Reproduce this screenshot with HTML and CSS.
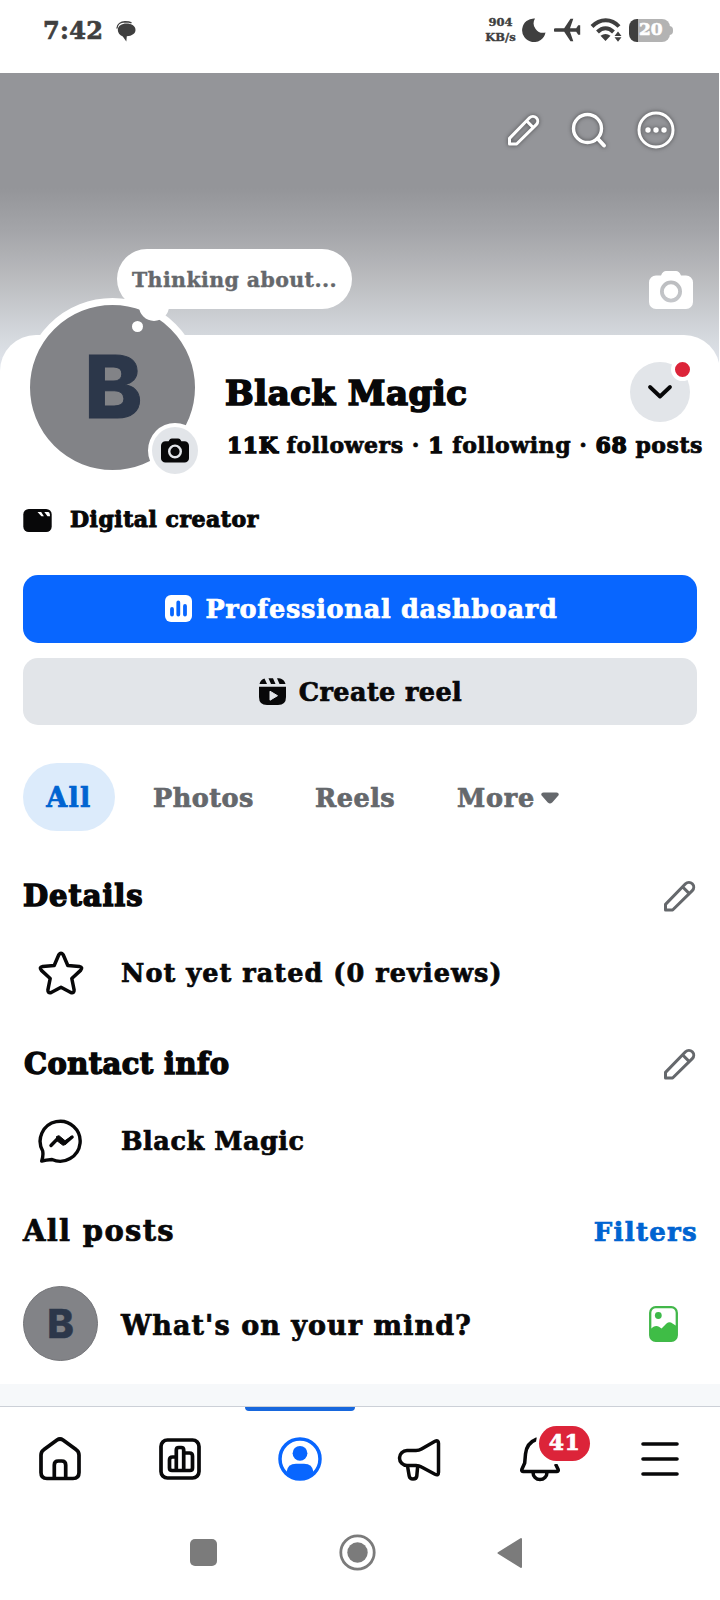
FILE: index.html
```html
<!DOCTYPE html>
<html lang="en">
<head>
<meta charset="utf-8">
<title>Black Magic</title>
<link rel="stylesheet" href="styles.css">
</head>
<body>
<svg class="defs" width="0" height="0">
  <symbol id="pencil" viewBox="0 0 34 34">
    <path d="M2.500 31v-5.600L22.500 4.800a4.800 4.800 0 0 1 6.800 6.800L9.600 31zM19.500 7.800l6.800 6.800" fill="none" stroke="currentColor" stroke-width="3" stroke-linejoin="round"/>
  </symbol>
  <symbol id="camera" viewBox="0 0 44 38">
    <path fill="currentColor" fill-rule="evenodd" d="M12 4.500C13.500 1 15 0 17 0h10c2 0 3.500 1 5 4.500h5a7 7 0 0 1 7 7V31a7 7 0 0 1-7 7H7a7 7 0 0 1-7-7V11.500a7 7 0 0 1 7-7zM22 9.500a11 11 0 1 0 0 22a11 11 0 1 0 0-22zM22 13.300a7.200 7.200 0 1 1 0 14.400a7.200 7.200 0 1 1 0-14.400z"/>
  </symbol>
</svg>

<header class="status">
  <div class="status-left">
    <span class="clock">7:42</span>
    <svg width="20" height="21" viewBox="0 0 20 21"><path d="M.9 7.500C1 3 5 .9 9 .8c3 0 5 .3 6.500 1" fill="none" stroke="#3f3f3f" stroke-width="1.400"/><path d="M10.500 2.600c5.200 0 9 2.600 9 6.400 0 3.600-3.500 6-8.700 6.200L10.300 20.500l-3.500-5C3.500 14 1.800 11.500 1.800 9c0-4 4-6.400 8.700-6.400z" fill="#3f3f3f"/></svg>
  </div>
  <div class="status-right">
    <div class="speed"><span>904</span><span>KB/s</span></div>
    <svg class="moon" width="24" height="24" viewBox="0 0 24 24"><path d="M13 .5A11.800 11.800 0 1 0 23.500 14.500 9.500 9.500 0 0 1 13 .5z" fill="#3f3f3f"/></svg>
    <svg class="plane" width="27" height="24" viewBox="0 0 27 24"><path d="M1.500 10.200h8.700L16.500.800h2.800L16 10.200h6.200l2-3h2V16.800h-2l-2-3H16l3.300 9.400h-2.800l-6.300-9.400H1.500a1.800 1.800 0 0 1 0-3.600z" fill="#3f3f3f"/></svg>
    <svg class="wifi" width="32" height="24" viewBox="0 0 32 24"><g fill="none" stroke="#3f3f3f" stroke-width="4"><path d="M2 8.500c8-8.300 19.500-8.300 27 0"/><path d="M7.500 14c5-5 11-5 16 0"/></g><path d="M10.500 17.700q5-3.500 10 0l-5 5.300zM28 13.500l3.500 4.500h-7zM28 23.800l3.500-4.500h-7z" fill="#3f3f3f"/></svg>
    <div class="battery"><span>20</span></div>
  </div>
</header>

<section class="cover">
  <div class="cover-actions">
    <svg width="34" height="34"><use href="#pencil"/></svg>
    <svg width="36" height="38" viewBox="0 0 36 38"><circle cx="16.500" cy="17.500" r="14" fill="none" stroke="#fff" stroke-width="3.400"/><path d="M26.500 27.500l6.500 7" stroke="#fff" stroke-width="4" stroke-linecap="round"/></svg>
    <svg width="38" height="38" viewBox="0 0 38 38"><circle cx="19" cy="19" r="17" fill="none" stroke="#fff" stroke-width="3"/><g fill="#fff"><circle cx="11" cy="19" r="2.700"/><circle cx="19" cy="19" r="2.700"/><circle cx="27" cy="19" r="2.700"/></g></svg>
  </div>
  <svg class="cover-camera" width="44" height="38"><use href="#camera"/></svg>
</section>

<main class="sheet">
  <div class="profile">
    <div class="avatar">
      <span class="initial">B</span>
      <div class="bubble">Thinking about...</div>
      <i class="dot"></i>
      <div class="avatar-camera"><svg width="28" height="25"><use href="#camera"/></svg></div>
    </div>
    <div class="info">
      <div class="name-row">
        <h1>Black Magic</h1>
        <div class="switch">
          <svg width="26" height="16" viewBox="0 0 26 16"><path d="M3 3l10 9.500L23 3" fill="none" stroke="#080809" stroke-width="3.800" stroke-linecap="round" stroke-linejoin="round"/></svg>
          <i class="alert"></i>
        </div>
      </div>
      <p class="stats"><b>11K</b> followers · <b>1</b> following · <b>68</b> posts</p>
    </div>
  </div>

  <div class="category">
    <svg width="29" height="23" viewBox="0 0 29 23"><rect x=".3" width="28.400" height="23" rx="5.500" fill="#080809"/><path d="M14.500 3h3.700l2.700 4.300h-2.500zM21.300 3H25q2 0 2 4.300h-2.500z" fill="#fff"/></svg>
    <span>Digital creator</span>
  </div>

  <div class="buttons">
    <div class="button primary">
      <svg width="27" height="27" viewBox="0 0 27 27"><rect width="27" height="27" rx="6" fill="#fff"/><path d="M7 14v5.500M13.300 7.500v12M20 11v8.500" stroke="#0866ff" stroke-width="3.800" stroke-linecap="round"/></svg>
      <span>Professional dashboard</span>
    </div>
    <div class="button secondary">
      <svg width="27" height="27" viewBox="0 0 27 27"><path fill="#080809" d="M.5 6Q1.500 1.500 5.500.400L8 6zM9.500.2h4.500l2.500 5.800H12zM18 .2c5 0 7.500 2 8.500 5.800H20.500zM0 8.800h27V19q0 8-8 8H8q-8 0-8-8z"/><path d="M11 13.200v9l7.500-4.500z" fill="#e2e5e9" stroke="#e2e5e9" stroke-linejoin="round"/></svg>
      <span>Create reel</span>
    </div>
  </div>

  <nav class="tabs">
    <span class="tab active">All</span>
    <span class="tab photos">Photos</span>
    <span class="tab reels">Reels</span>
    <span class="tab more">More<svg width="18" height="12" viewBox="0 0 18 12"><path d="M2.500 1.500Q1.200 1.500 1.200 2.700L7.500 9.800Q9 11 10.500 9.800L16.800 2.700Q16.800 1.500 15.500 1.500z" fill="#65686c" stroke="#65686c" stroke-width="2" stroke-linejoin="round"/></svg></span>
  </nav>

  <div class="row heading details"><h2>Details</h2><svg class="edit" width="34" height="34"><use href="#pencil"/></svg></div>
  <div class="row item rating">
    <svg width="46" height="46" viewBox="0 0 46 46"><path d="M20.800 4.800q2.200-3.200 4.400 0l4.600 10.700 11.500.9q4 .8 1.300 4l-8.800 8.100 2.300 11.300q.2 3.800-3.300 2.700L23 37.200l-9.800 5.300q-3.500 1.100-3.300-2.700l2.300-11.300-8.800-8.100q-2.700-3.200 1.300-4l11.500-.9z" fill="none" stroke="#080809" stroke-width="3.500" stroke-linejoin="round"/></svg>
    <span>Not yet rated (0 reviews)</span>
  </div>
  <div class="row heading contact"><h2>Contact info</h2><svg class="edit" width="34" height="34"><use href="#pencil"/></svg></div>
  <div class="row item messenger">
    <svg width="46" height="46" viewBox="0 0 46 46"><path d="M3.700 43Q5.500 38 4.700 33A20 20 0 1 1 14 41.500Q8 42 3.700 43z" fill="none" stroke="#080809" stroke-width="3.400" stroke-linejoin="round"/><path d="M13 27.500l7.300-7.500 6.800 5 7-6" fill="none" stroke="#080809" stroke-width="3.400" stroke-linecap="round" stroke-linejoin="round"/><path d="M18.500 18.500l2.500-.8 6 5 6-4-5.500 7.800-2.500.8-6-4.500z" fill="#080809" stroke="#080809" stroke-linejoin="round"/></svg>
    <span>Black Magic</span>
  </div>
  <div class="row heading posts"><h2>All posts</h2><a class="filters">Filters</a></div>
  <div class="composer">
    <div class="mini">B</div>
    <span>What's on your mind?</span>
    <svg width="29" height="36" viewBox="0 0 29 36"><rect x="1.200" y="1.200" width="26.600" height="33.600" rx="5.500" fill="none" stroke="#42b74a" stroke-width="2.300"/><circle cx="9.300" cy="9.500" r="3.400" fill="#3dba4a"/><path d="M1.500 23l3-2.200q3-1.500 5.500 0l2.500 1.700 5-5q3-2.700 6 0l4 2.500V30q0 5-5 5h-16q-5 0-5-5z" fill="#3fbd46"/></svg>
  </div>
</main>

<div class="divider"></div>

<nav class="bottom">
  <div class="nav-item"><svg width="46" height="46" viewBox="0 0 46 46"><path d="M4 19q0-3.500 3-5.500l13-9.500q3-2 6 0l13 9.500q3 2 3 5.500v17.500q0 6-6 6H10q-6 0-6-6zM17.300 42V29q0-4 4-4h3.400q4 0 4 4v13" fill="none" stroke="#080809" stroke-width="3.700" stroke-linejoin="round"/></svg></div>
  <div class="nav-item"><svg width="46" height="46" viewBox="0 0 46 46"><g fill="none" stroke="#080809" stroke-width="3.700" stroke-linejoin="round"><rect x="4" y="4" width="38" height="38" rx="6.500"/><path d="M19.300 34.500V14q0-2.500 2.500-2.500h2.400q2.500 0 2.500 2.500v20.500M19.300 21h-3.800q-3 0-3 3v8q0 2.500 2.500 2.500h18q2.500 0 2.500-2.500V20q0-3-3-3h-5.800"/></g></svg></div>
  <div class="nav-item current"><svg width="46" height="46" viewBox="0 0 46 46"><circle cx="23" cy="23" r="20" fill="none" stroke="#0866ff" stroke-width="3.500"/><circle cx="23" cy="17.300" r="7.400" fill="#0866ff"/><path d="M9.500 36q1-8.300 9.500-8.300h8q8.500 0 9.500 8.300Q31 43 23 43T9.500 36z" fill="#0866ff"/></svg></div>
  <div class="nav-item"><svg width="46" height="46" viewBox="0 0 46 46"><path d="M10 14.500h9q3 0 5.500-1.500L38 5.300q3.500-1.700 3.500 2v29q0 3.700-3.500 2L24.500 31q-2.500-1.500-5.500-1.500h-9a7.500 7.500 0 0 1 0-15zM10.500 30l1.700 10q.5 3 3.800 3 3.500 0 3.800-3l.9-10" fill="none" stroke="#080809" stroke-width="3.500" stroke-linejoin="round"/></svg></div>
  <div class="nav-item"><svg width="46" height="46" viewBox="0 0 46 46"><path d="M20 3Q9.500 7 8.500 18L7.700 27 4.800 33.500q-.5 2 1.500 2h33.400q2 0 1.500-2L38.500 28M16 36.500a7 7 0 0 0 14 0" fill="none" stroke="#080809" stroke-width="3.500" stroke-linejoin="round"/></svg><span class="badge">41</span></div>
  <div class="nav-item"><svg width="46" height="46" viewBox="0 0 46 46"><path d="M6 8h34M6 23h34M6 38h34" stroke="#080809" stroke-width="3.600" stroke-linecap="round"/></svg></div>
</nav>

<footer class="system">
  <svg width="27" height="27"><rect width="27" height="27" rx="5" fill="#7b7b7b"/></svg>
  <svg width="37" height="37" viewBox="0 0 37 37"><circle cx="18.500" cy="18.500" r="16.700" fill="none" stroke="#7b7b7b" stroke-width="2.800"/><circle cx="18.500" cy="18.500" r="10.200" fill="#7b7b7b"/></svg>
  <svg width="26" height="32" viewBox="0 0 26 32"><path d="M1.500 16L24 2v28z" fill="#7b7b7b" stroke="#7b7b7b" stroke-width="2" stroke-linejoin="round"/></svg>
</footer>
</body>
</html>
```
FILE: styles.css
```css
* { box-sizing: border-box; }
body {
  margin: 0;
  width: 720px;
  height: 1600px;
  overflow: hidden;
  background: #fff;
  color: #080809;
  font-family: "DejaVu Serif", serif;
  font-weight: bold;
  white-space: nowrap;
  -webkit-text-stroke: .7px;
}
h1, h2, p { margin: 0; }
svg { display: block; flex: none; }
.defs { position: absolute; }

.status {
  height: 73px;
  padding: 0 47px 13px 43px;
  display: flex;
  justify-content: space-between;
  align-items: center;
  color: #3f3f3f;
}
.status-left, .status-right { display: flex; align-items: center; }
.status-left { gap: 13px; }
.status-left svg { margin-top: 2px; }
.clock { font-size: 24px; letter-spacing: .3px; }
.speed {
  width: 31px;
  display: flex;
  flex-direction: column;
  align-items: center;
  font-size: 11.5px;
  line-height: 15.5px;
  -webkit-text-stroke: .4px;
}
.moon { margin-left: 6px; }
.plane { margin-left: 8px; }
.wifi { margin-left: 9px; }
.battery {
  position: relative;
  width: 41px;
  height: 23px;
  margin: 0 3px 0 7px;
  border-radius: 8px;
  background: linear-gradient(90deg, #3f3f3f 9px, #b3b3b3 9px);
  color: #fff;
  font-size: 17px;
  line-height: 21px;
  padding-left: 10px;
  -webkit-text-stroke: .6px;
}
.battery::after {
  content: "";
  position: absolute;
  right: -3px;
  top: 7px;
  width: 4px;
  height: 9px;
  border-radius: 0 4px 4px 0;
  background: #b3b3b3;
}

.cover {
  width: 719px;
  height: 300px;
  padding: 38px 44px 0 0;
  background: linear-gradient(#949599 0, #949599 115px, #a4a5a9 158px, #babbbe 205px, #d4d8dd 262px, #e4e8ef 300px);
  color: #fff;
  display: flex;
  flex-direction: column;
  align-items: flex-end;
}
.cover-actions {
  display: flex;
  align-items: center;
  gap: 30px;
  filter: drop-shadow(0 0 2px rgba(0, 0, 0, .5));
}
.cover-camera { margin: 122px -18px 0 0; }

.sheet {
  position: relative;
  height: 1049px;
  margin-top: -38px;
  padding: 0 23px;
  border-radius: 36px 36px 0 0;
  background: #fff;
}
.profile { display: flex; height: 164px; }
.avatar {
  position: relative;
  flex: none;
  width: 179px;
  height: 179px;
  margin-top: -37px;
  border: 7px solid #fff;
  border-radius: 50%;
  background: #828387;
  display: flex;
  align-items: center;
  justify-content: center;
}
.initial {
  font: 800 87px/86px Inter, "Liberation Sans", sans-serif;
  color: #2c374a;
  padding: 0 0 2px 2px;
  -webkit-text-stroke: 1px;
}
.bubble {
  position: absolute;
  left: 87px;
  top: -56px;
  width: 235px;
  height: 60px;
  border-radius: 30px;
  background: #fff;
  color: #65686c;
  font-size: 20.5px;
  letter-spacing: .4px;
  line-height: 62px;
  text-align: center;
  -webkit-text-stroke: .4px;
}
.bubble::after {
  content: "";
  position: absolute;
  left: 22px;
  top: 42px;
  width: 30px;
  height: 30px;
  border-radius: 50%;
  background: #fff;
}
.dot {
  position: absolute;
  left: 102px;
  top: 16px;
  width: 11px;
  height: 11px;
  border-radius: 50%;
  background: #fff;
}
.avatar-camera {
  position: absolute;
  left: 118px;
  top: 118px;
  width: 54px;
  height: 55px;
  border: 4px solid #fff;
  border-radius: 50%;
  background: #e2e5e9;
  display: flex;
  align-items: center;
  justify-content: center;
}
.info { flex: 1; min-width: 0; padding: 27px 0 0 23px; }
.name-row {
  height: 60px;
  margin-right: 7px;
  display: flex;
  align-items: center;
  justify-content: space-between;
}
h1 { font-size: 34px; letter-spacing: .5px; -webkit-text-stroke: 1.7px; padding-top: 1px; }
.switch {
  position: relative;
  width: 60px;
  height: 60px;
  border-radius: 50%;
  background: #e2e5e9;
  display: flex;
  align-items: center;
  justify-content: center;
}
.alert {
  position: absolute;
  right: -4px;
  top: -4px;
  width: 23px;
  height: 23px;
  border: 4px solid #fff;
  border-radius: 50%;
  background: #dc2439;
}
.stats { margin-top: 8px; padding-left: 2px; font-size: 22px; line-height: 30px; letter-spacing: .52px; }
.stats b { -webkit-text-stroke: 1.4px; }

.category {
  height: 40px;
  display: flex;
  align-items: center;
  gap: 18px;
  font-size: 22px;
  letter-spacing: .5px;
  -webkit-text-stroke: 1px;
}
.category svg { margin-top: 3px; }

.buttons { margin-top: 36px; display: flex; flex-direction: column; gap: 15px; }
.button {
  height: 67.5px;
  border-radius: 15px;
  display: flex;
  align-items: center;
  justify-content: center;
  gap: 13px;
  font-size: 25.5px;
}
.button span { padding-top: 1px; }
.primary { background: #0866ff; color: #fff; letter-spacing: .75px; padding-left: 3px; }
.secondary { background: #e2e5e9; letter-spacing: .4px; padding-left: 1px; }

.tabs {
  height: 68px;
  margin-top: 38px;
  display: flex;
  align-items: center;
  color: #65686c;
  font-size: 25.5px;
}
.tab { letter-spacing: .5px; padding-top: 1px; }
.active {
  width: 92px;
  height: 68px;
  border-radius: 34px;
  background: #dcebfb;
  color: #0064d1;
  font-size: 27px;
  letter-spacing: 1.3px;
  line-height: 68px;
  text-align: center;
}
.photos { width: 162px; padding-left: 38px; }
.reels { width: 141px; padding-left: 38px; }
.more { display: flex; align-items: center; gap: 6px; padding-left: 39px; letter-spacing: .8px; }

.row { height: 60px; display: flex; align-items: center; }
.heading { justify-content: space-between; }
.edit { color: #65686c; margin-top: 1px; }
h2 { font-size: 29px; letter-spacing: .9px; -webkit-text-stroke: 1.4px; padding-top: 1px; }
.details { margin-top: 34px; }
.contact { margin-top: 30px; }
.contact h2 { letter-spacing: .4px; padding-left: 1px; }
.posts { margin-top: 30px; }
.posts h2 { letter-spacing: 1.3px; -webkit-text-stroke: .7px; }
.item { padding-left: 15px; gap: 37px; font-size: 25.5px; }
.rating { margin-top: 18px; letter-spacing: 1.07px; }
.messenger { margin-top: 18px; margin-bottom: -1px; letter-spacing: .55px; }
.filters { color: #0064d1; font-size: 26px; letter-spacing: 1.3px; padding-top: 3px; margin-right: -1px; }
.composer {
  height: 75px;
  margin-top: 26px;
  padding-right: 19px;
  display: flex;
  align-items: center;
  font-size: 27px;
  letter-spacing: 1.05px;
}
.composer span { flex: 1; padding: 3px 0 0 23px; }
.mini {
  width: 75px;
  height: 75px;
  border: 1px solid #747579;
  border-radius: 50%;
  background: #828387;
  color: #2c374a;
  font: 800 40px/73px Inter, "Liberation Sans", sans-serif;
  letter-spacing: 0;
  text-align: center;
  -webkit-text-stroke: .5px;
}

.divider { height: 23px; background: #f6f8fa; border-bottom: 1px solid #ccd0d7; }
.bottom { height: 103px; display: flex; }
.nav-item {
  position: relative;
  width: 120px;
  display: flex;
  align-items: center;
  justify-content: center;
}
.current::before {
  content: "";
  position: absolute;
  left: 5px;
  top: 0;
  width: 110px;
  height: 4px;
  border-radius: 0 0 4px 4px;
  background: #1767dd;
}
.badge {
  position: absolute;
  left: 59px;
  top: 19px;
  width: 51px;
  height: 35px;
  border-radius: 18px;
  background: #dc2439;
  box-shadow: 0 0 0 3px #fff;
  color: #fff;
  font-size: 22px;
  letter-spacing: .5px;
  line-height: 32px;
  text-align: center;
}
.system {
  height: 90px;
  padding: 0 197px 5px 190px;
  display: flex;
  align-items: center;
  justify-content: space-between;
}
```
